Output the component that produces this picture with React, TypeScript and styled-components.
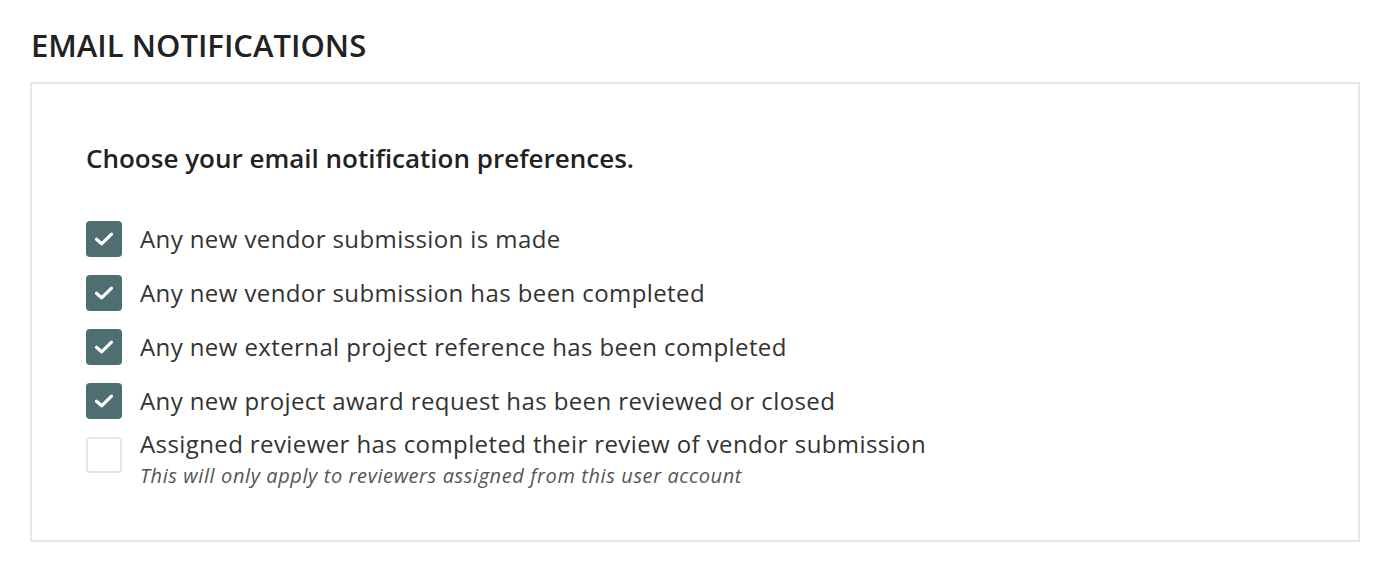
import React, { useState } from "react";
import styled, { createGlobalStyle } from "styled-components";

const GlobalStyle = createGlobalStyle`
  html, body {
    margin: 0;
    padding: 0;
    background: #ffffff;
  }
  body {
    font-family: "Open Sans", "Liberation Sans", sans-serif;
    color: #222;
  }
`;

type Pref = {
  id: string;
  label: string;
  hint?: string;
  checked: boolean;
};

const initialPrefs: Pref[] = [
  { id: "made", label: "Any new vendor submission is made", checked: true },
  { id: "done", label: "Any new vendor submission has been completed", checked: true },
  { id: "ref", label: "Any new external project reference has been completed", checked: true },
  { id: "award", label: "Any new project award request has been reviewed or closed", checked: true },
  {
    id: "review",
    label: "Assigned reviewer has completed their review of vendor submission",
    hint: "This will only apply to reviewers assigned from this user account",
    checked: false,
  },
];

const CheckMark = () => (
  <svg width="22" height="16" viewBox="0 0 22 16" fill="none">
    <path
      d="M3.5 8.2 L8.6 12.8 L18.5 3.2"
      stroke="#ffffff"
      strokeWidth="3.2"
      strokeLinecap="round"
      strokeLinejoin="round"
    />
  </svg>
);

export default function App() {
  const [prefs, setPrefs] = useState<Pref[]>(initialPrefs);

  const toggle = (id: string) =>
    setPrefs((list) =>
      list.map((p) => (p.id === id ? { ...p, checked: !p.checked } : p))
    );

  return (
    <StyledPage>
      <GlobalStyle />
      <StyledTitle>EMAIL NOTIFICATIONS</StyledTitle>
      <StyledPanel>
        <StyledIntro>Choose your email notification preferences.</StyledIntro>
        <StyledList>
          {prefs.map((p) => (
            <StyledRow key={p.id} onClick={() => toggle(p.id)}>
              <StyledBox checked={p.checked}>{p.checked && <CheckMark />}</StyledBox>
              <StyledTextCol hinted={!!p.hint}>
                <StyledLabel>{p.label}</StyledLabel>
                {p.hint && <StyledHint>{p.hint}</StyledHint>}
              </StyledTextCol>
            </StyledRow>
          ))}
        </StyledList>
      </StyledPanel>
    </StyledPage>
  );
}

const StyledPage = styled.main`
  padding: 25px 40px 36px 30px;
  width: 1330px;
`;

const StyledTitle = styled.h1`
  margin: 0 0 0 1px;
  font-size: 31px;
  line-height: 40px;
  font-weight: 600;
  color: #222;
`;

const StyledPanel = styled.section`
  margin-top: 17px;
  border: 2px solid #e8e8e8;
  padding: 57px 54px 53px 54px;
`;

const StyledIntro = styled.h2`
  margin: 0 0 46px 0;
  font-size: 26px;
  line-height: 34px;
  font-weight: 600;
  color: #222;
`;

const StyledList = styled.div`
  display: flex;
  flex-direction: column;
  gap: 18px;
`;

const StyledRow = styled.label`
  display: flex;
  align-items: flex-start;
  gap: 18px;
  cursor: pointer;
`;

const StyledBox = styled.span<{ checked: boolean }>`
  flex: none;
  display: flex;
  align-items: center;
  justify-content: center;
  width: 36px;
  height: 36px;
  box-sizing: border-box;
  border-radius: 4px;
  background: ${({ checked }) => (checked ? "#4e6e71" : "#ffffff")};
  border: ${({ checked }) => (checked ? "none" : "2px solid #e6e6e6")};
`;

const StyledTextCol = styled.div<{ hinted: boolean }>`
  display: flex;
  flex-direction: column;
  margin-top: ${({ hinted }) => (hinted ? "-8px" : "3px")};
`;

const StyledLabel = styled.span`
  font-size: 24px;
  line-height: 30px;
  letter-spacing: 0.4px;
  color: #333;
`;

const StyledHint = styled.span`
  margin-top: 6px;
  font-size: 20px;
  line-height: 22px;
  letter-spacing: 0.6px;
  font-style: italic;
  color: #555;
`;
